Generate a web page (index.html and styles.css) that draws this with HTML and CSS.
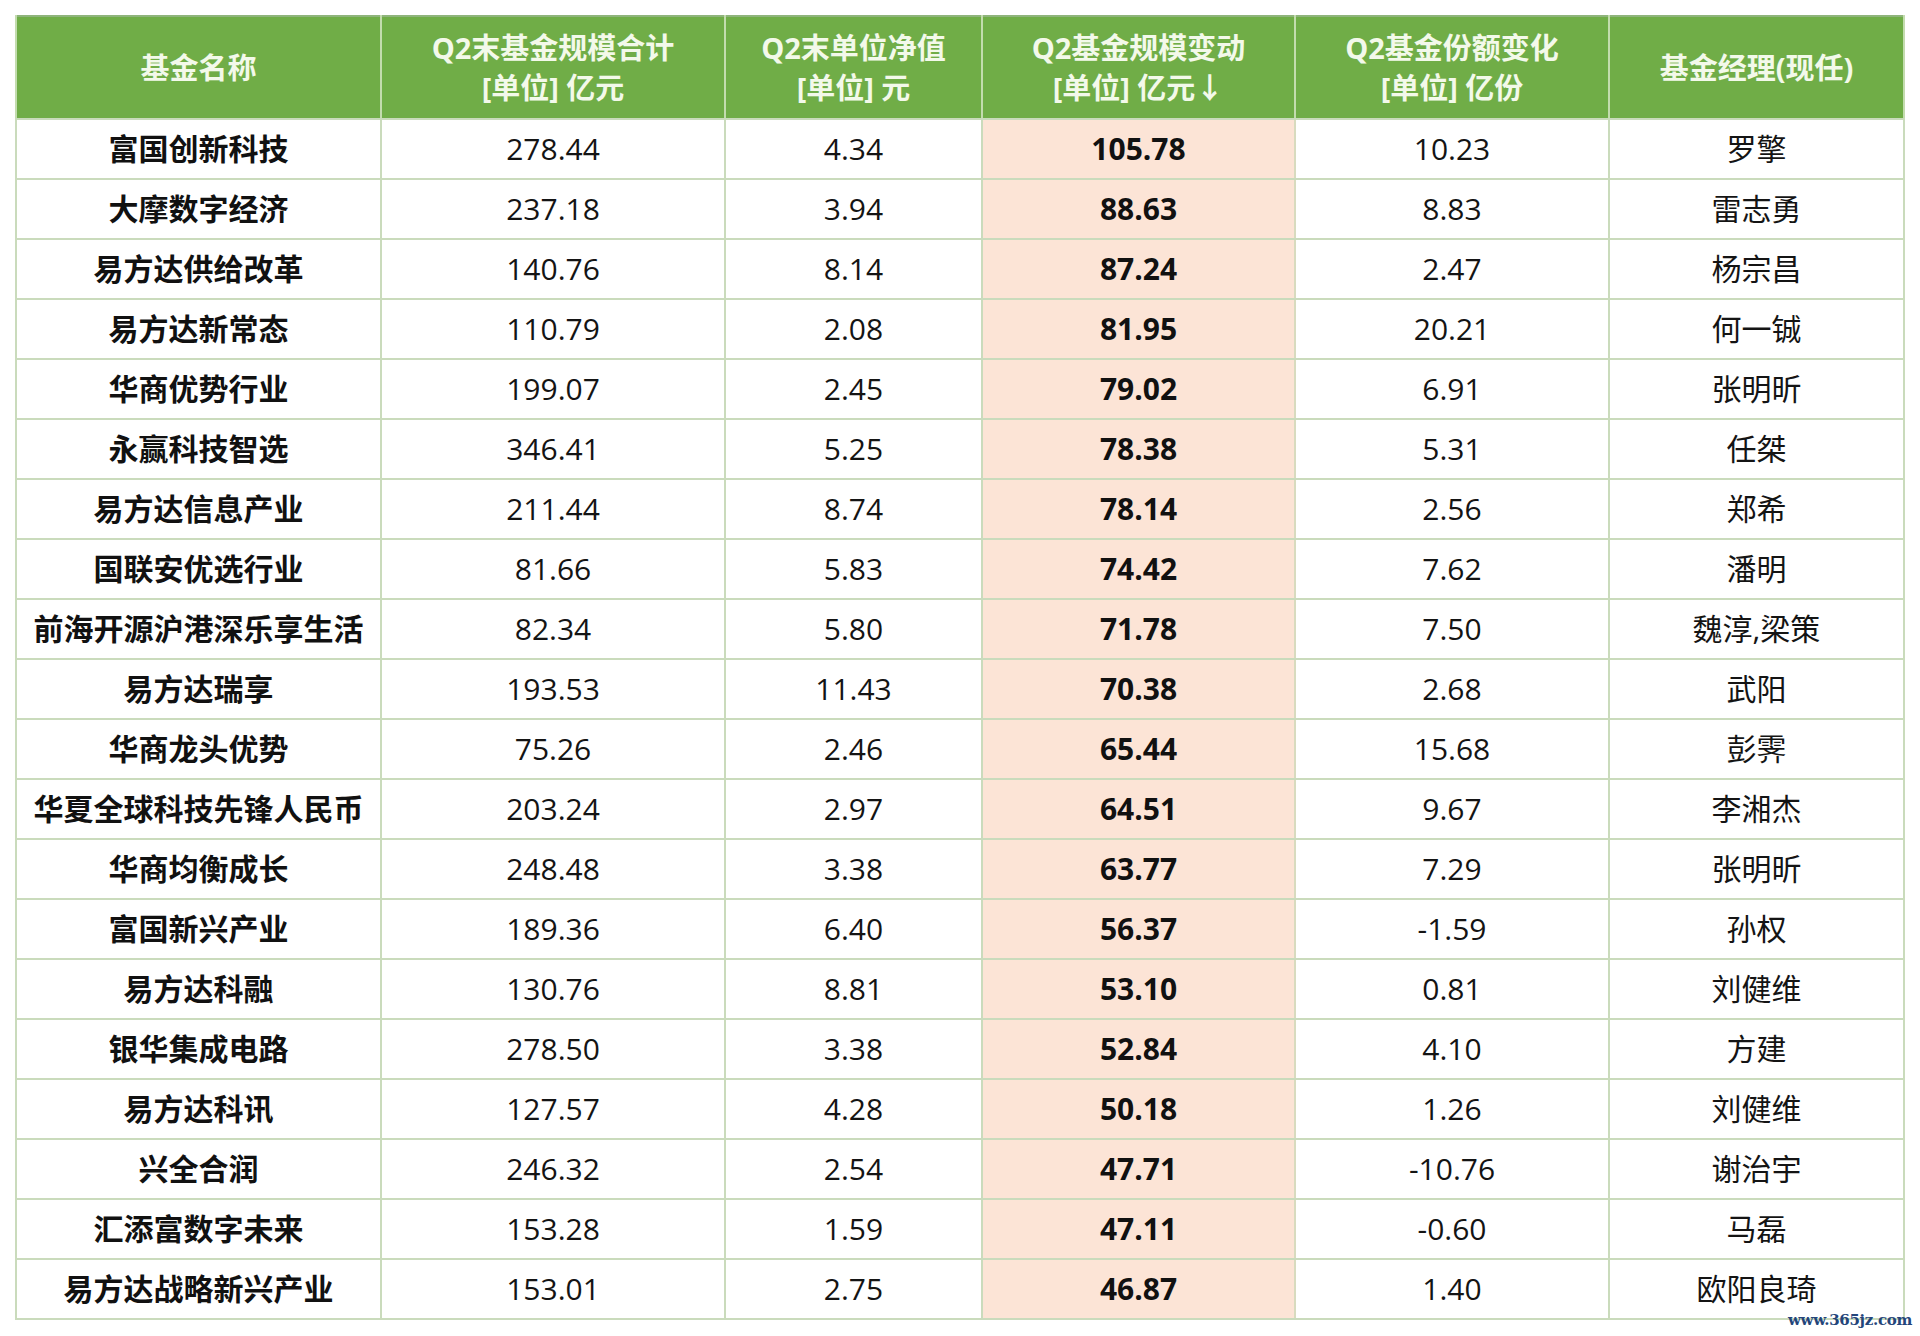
FILE: index.html
```html
<!DOCTYPE html>
<html lang="zh-CN">
<head>
<meta charset="utf-8">
<title>Q2基金规模变动</title>
<link rel="stylesheet" href="styles.css">
</head>
<body>
<div class="page">
  <table class="fund-table">
    <colgroup>
      <col class="c1"><col class="c2"><col class="c3"><col class="c4"><col class="c5"><col class="c6">
    </colgroup>
    <thead>
      <tr>
        <th>基金名称</th>
        <th>Q2末基金规模合计<br>[单位] 亿元</th>
        <th>Q2末单位净值<br>[单位] 元</th>
        <th>Q2基金规模变动<br>[单位] 亿元↓</th>
        <th>Q2基金份额变化<br>[单位] 亿份</th>
        <th>基金经理(现任)</th>
      </tr>
    </thead>
    <tbody>
      <tr><td class="name">富国创新科技</td><td>278.44</td><td>4.34</td><td class="hl">105.78</td><td>10.23</td><td>罗擎</td></tr>
      <tr><td class="name">大摩数字经济</td><td>237.18</td><td>3.94</td><td class="hl">88.63</td><td>8.83</td><td>雷志勇</td></tr>
      <tr><td class="name">易方达供给改革</td><td>140.76</td><td>8.14</td><td class="hl">87.24</td><td>2.47</td><td>杨宗昌</td></tr>
      <tr><td class="name">易方达新常态</td><td>110.79</td><td>2.08</td><td class="hl">81.95</td><td>20.21</td><td>何一铖</td></tr>
      <tr><td class="name">华商优势行业</td><td>199.07</td><td>2.45</td><td class="hl">79.02</td><td>6.91</td><td>张明昕</td></tr>
      <tr><td class="name">永赢科技智选</td><td>346.41</td><td>5.25</td><td class="hl">78.38</td><td>5.31</td><td>任桀</td></tr>
      <tr><td class="name">易方达信息产业</td><td>211.44</td><td>8.74</td><td class="hl">78.14</td><td>2.56</td><td>郑希</td></tr>
      <tr><td class="name">国联安优选行业</td><td>81.66</td><td>5.83</td><td class="hl">74.42</td><td>7.62</td><td>潘明</td></tr>
      <tr><td class="name">前海开源沪港深乐享生活</td><td>82.34</td><td>5.80</td><td class="hl">71.78</td><td>7.50</td><td>魏淳,梁策</td></tr>
      <tr><td class="name">易方达瑞享</td><td>193.53</td><td>11.43</td><td class="hl">70.38</td><td>2.68</td><td>武阳</td></tr>
      <tr><td class="name">华商龙头优势</td><td>75.26</td><td>2.46</td><td class="hl">65.44</td><td>15.68</td><td>彭霁</td></tr>
      <tr><td class="name">华夏全球科技先锋人民币</td><td>203.24</td><td>2.97</td><td class="hl">64.51</td><td>9.67</td><td>李湘杰</td></tr>
      <tr><td class="name">华商均衡成长</td><td>248.48</td><td>3.38</td><td class="hl">63.77</td><td>7.29</td><td>张明昕</td></tr>
      <tr><td class="name">富国新兴产业</td><td>189.36</td><td>6.40</td><td class="hl">56.37</td><td>-1.59</td><td>孙权</td></tr>
      <tr><td class="name">易方达科融</td><td>130.76</td><td>8.81</td><td class="hl">53.10</td><td>0.81</td><td>刘健维</td></tr>
      <tr><td class="name">银华集成电路</td><td>278.50</td><td>3.38</td><td class="hl">52.84</td><td>4.10</td><td>方建</td></tr>
      <tr><td class="name">易方达科讯</td><td>127.57</td><td>4.28</td><td class="hl">50.18</td><td>1.26</td><td>刘健维</td></tr>
      <tr><td class="name">兴全合润</td><td>246.32</td><td>2.54</td><td class="hl">47.71</td><td>-10.76</td><td>谢治宇</td></tr>
      <tr><td class="name">汇添富数字未来</td><td>153.28</td><td>1.59</td><td class="hl">47.11</td><td>-0.60</td><td>马磊</td></tr>
      <tr><td class="name">易方达战略新兴产业</td><td>153.01</td><td>2.75</td><td class="hl">46.87</td><td>1.40</td><td>欧阳良琦</td></tr>
    </tbody>
  </table>
  <div class="watermark">www.365jz.com</div>
</div>
</body>
</html>
```

FILE: styles.css
```css
html, body {
  margin: 0;
  padding: 0;
  background: #ffffff;
}

.page {
  position: relative;
  width: 1920px;
  height: 1336px;
  padding: 15px 0 0 15px;
  box-sizing: border-box;
  font-family: "Open Sans", "Noto Sans CJK SC", sans-serif;
}

.fund-table {
  border-collapse: collapse;
  table-layout: fixed;
  width: 1888px;
  border: 2px solid #8fb47c;
}

.c1 { width: 365px; }
.c2 { width: 344px; }
.c3 { width: 257px; }
.c4 { width: 313px; }
.c5 { width: 314px; }
.c6 { width: 295px; }

.fund-table th {
  height: 101px;
  padding: 0;
  background: #70ad47;
  color: #f3f9ea;
  font-family: "Open Sans", "Noto Sans CJK SC", sans-serif;
  font-weight: 700;
  font-size: 29px;
  line-height: 40px;
  text-align: center;
  vertical-align: middle;
  border-left: 2px solid #c3dcae;
  border-right: 2px solid #c3dcae;
  border-bottom: 2px solid #c9dbbb;
}

.fund-table td {
  height: 58px;
  padding: 0;
  color: #141414;
  font-size: 30px;
  line-height: 40px;
  text-align: center;
  vertical-align: middle;
  border: 2px solid #cadbbc;
  background: #ffffff;
}

.fund-table td.name {
  font-weight: 700;
  color: #111111;
}

.fund-table td.hl {
  background: #fce4d6;
  font-weight: 700;
  color: #111111;
  border-left-color: #d8dbbf;
  border-right-color: #d8dbbf;
}

.watermark {
  position: absolute;
  right: 8px;
  bottom: 7px;
  font-family: "DejaVu Serif", serif;
  font-size: 15px;
  font-weight: 700;
  letter-spacing: -0.3px;
  color: #24457a;
  background: transparent;
}
```
